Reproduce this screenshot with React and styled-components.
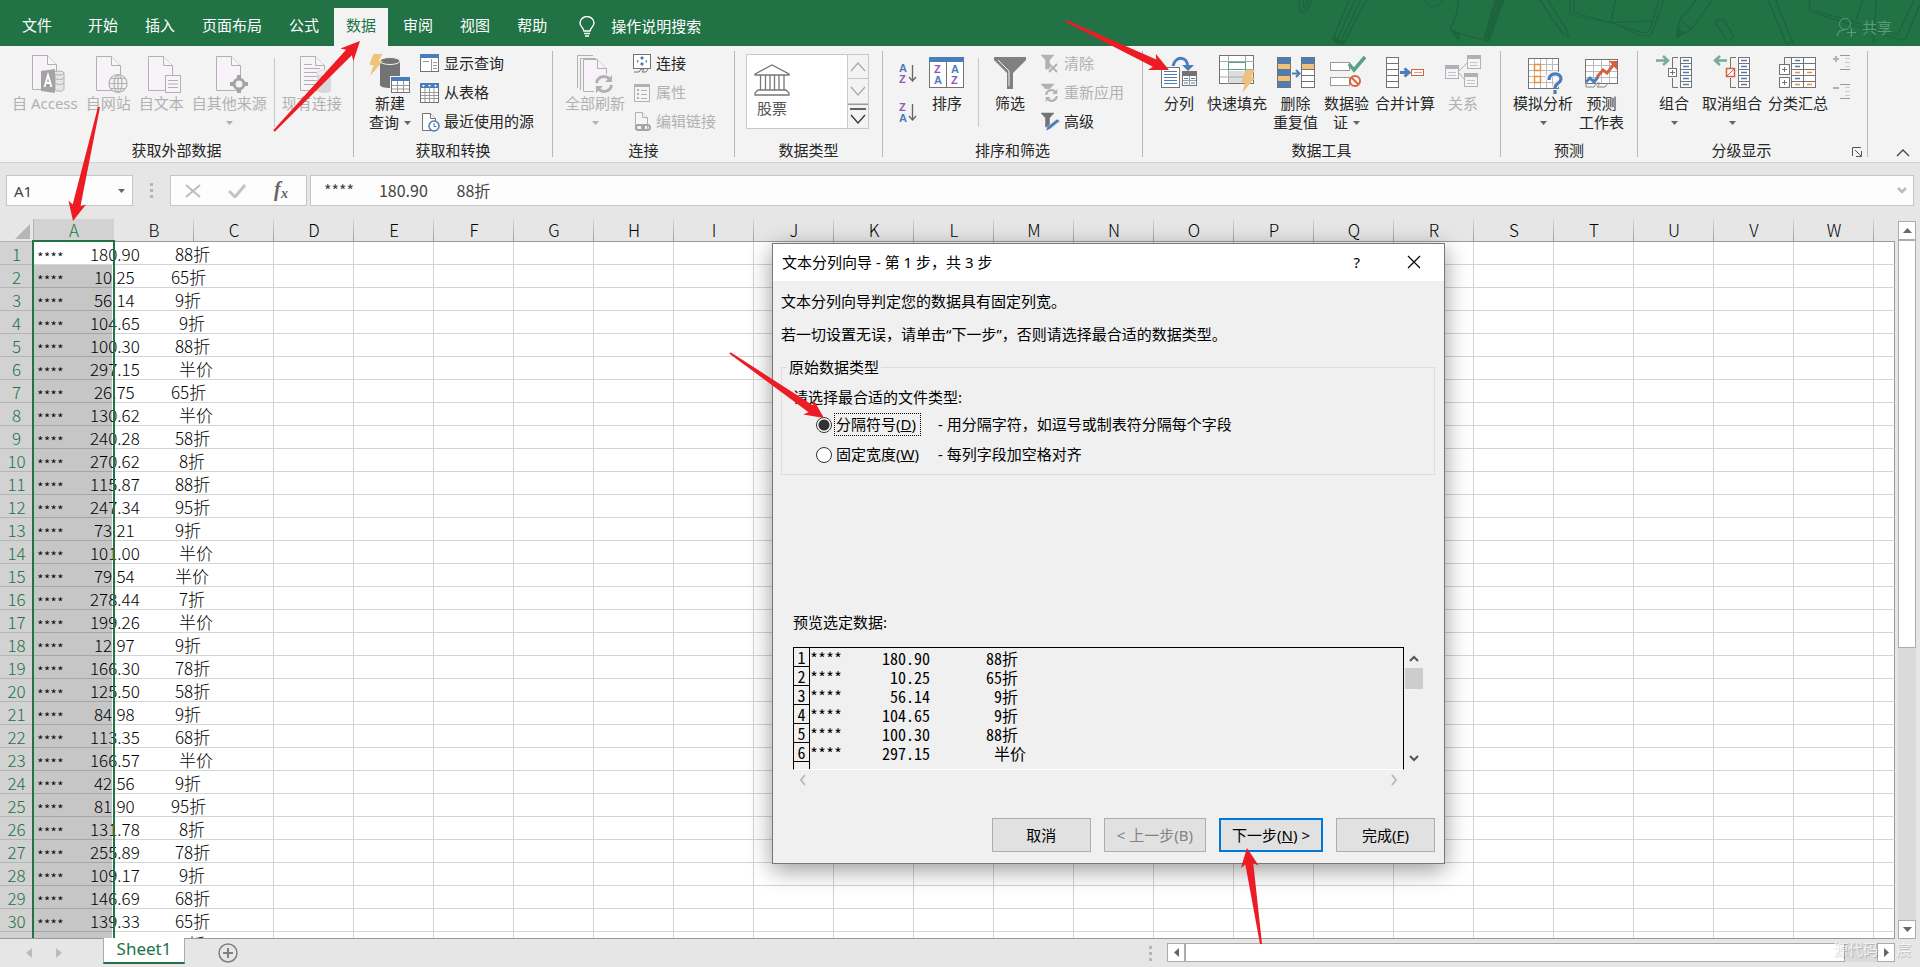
import React from "react";
import styled, { createGlobalStyle, css } from "styled-components";

const ui = `"Noto Sans", "Noto Sans CJK SC", sans-serif`;
const cell = `"Noto Sans CJK SC", "Noto Sans", sans-serif`;
const mono = `"Noto Sans Mono CJK SC", "Liberation Mono", "Noto Sans CJK SC", monospace`;
const green = "#217346";
const off = "#b1b1b1";
const dark = "#737373";
const blue = "#4a7ebb";

const Global = createGlobalStyle`
  *, *::before, *::after { box-sizing: border-box; }
  body { margin: 0; font: 15px/20px ${ui}; color: #262626; overflow: hidden; }
  button, input { font: inherit; color: inherit; margin: 0; }
  button { border: 0; padding: 0; background: none; }
  svg { display: block; flex: none; }
`;

const App_ = styled.div`
  position: relative;
  display: flex;
  flex-direction: column;
  height: 100vh;
  background: #e6e6e6;
`;

/* ---------- title tabs ---------- */
const TitleBar = styled.header`
  display: flex;
  align-items: flex-end;
  height: 46px;
  flex: none;
  background: ${green};
  color: #fff;
  position: relative;
`;
const Tabs = styled.nav`
  display: flex;
  gap: 3px;
  padding-left: 10px;
`;
const Tab = styled.button`
  height: 38px;
  padding: 0 12px 4px;
  white-space: nowrap;
  margin-right: ${(p) => (p.$file ? 9 : 0)}px;
  ${(p) => p.$on && css`background: #f3f3f3; color: ${green};`}
`;
const Tell = styled.button`
  display: flex;
  align-items: center;
  gap: 16px;
  height: 38px;
  margin-left: 20px;
  padding-bottom: 2px;
`;
const Doodle = styled.svg`
  position: absolute;
  right: 0;
  top: 0;
`;
const Share = styled.button`
  display: flex;
  align-items: center;
  gap: 6px;
  height: 38px;
  margin: 0 28px 0 auto;
  color: #5b9c79;
  position: relative;
`;

/* ---------- ribbon ---------- */
const Ribbon = styled.div`
  display: flex;
  flex: none;
  height: 117px;
  padding: 5px 0;
  background: #f3f3f3;
  border-bottom: 1px solid #d2d2d2;
`;
const Group = styled.section`
  display: flex;
  flex-direction: column;
  width: ${(p) => p.$w}px;
  flex: none;
  padding-top: 3px;
  border-right: 1px solid #b8b8b8;
  position: relative;
`;
const GroupBody = styled.div`
  display: flex;
  flex: 1;
  align-items: flex-start;
  padding-left: ${(p) => p.$pad || 10}px;
  gap: ${(p) => p.$gap || 0}px;
`;
const GroupLabel = styled.div`
  line-height: 12px;
  text-align: center;
  padding: 0 ${(p) => (p.$launch ? 22 : 0)}px 1px 0;
`;
const Launch = styled.button`
  position: absolute;
  right: 4px;
  bottom: 0;
`;
const Big = styled.button`
  display: flex;
  flex-direction: column;
  align-items: center;
  min-width: 50px;
  padding: 0 3px;
  line-height: 19px;
  white-space: nowrap;
  color: ${(p) => (p.disabled ? off : "#262626")};
`;
const Line = styled.span`
  display: flex;
  align-items: center;
  justify-content: center;
  gap: 5px;
  height: 19px;
`;
const Smalls = styled.div`
  display: flex;
  flex-direction: column;
  gap: 10px;
  margin-left: 2px;
`;
const Small = styled.button`
  display: flex;
  align-items: center;
  gap: 4px;
  height: 19px;
  white-space: nowrap;
  color: ${(p) => (p.disabled ? off : "#262626")};
  span { padding-bottom: 2px; }
`;
const Rule = styled.div`
  width: 1px;
  height: 69px;
  margin: 4px 2px 0;
  background: #c8c8c8;
`;
const Gallery = styled.div`
  display: flex;
  width: 123px;
  height: 75px;
  background: #fff;
  border: 1px solid #c8c8c8;
`;
const GalleryItem = styled.button`
  flex: 1;
  display: flex;
  flex-direction: column;
  align-items: flex-start;
  gap: 2px;
  padding: 9px 0 0 7px;
  color: #555;
  span { padding-left: 3px; }
`;
const GalleryNav = styled.div`
  display: flex;
  flex-direction: column;
  width: 21px;
  border-left: 1px solid #c8c8c8;
`;
const NavBtn = styled.button`
  flex: 1;
  display: grid;
  place-items: center;
  background: #f3f3f3;
  border-bottom: 1px solid #c8c8c8;
  &:last-child { background: #f3f3f3; border-top: 1px solid #999; border-bottom: 0; }
`;
const SortCol = styled.div`
  display: flex;
  flex-direction: column;
  gap: 18px;
  padding: 9px 0 0;
`;
const Collapse = styled.button`
  margin: auto 10px 0 auto;
`;

/* ---------- formula bar ---------- */
const FormulaBar = styled.div`
  display: flex;
  flex: none;
  height: 56px;
  padding: 12px 6px 13px;
`;
const Field = styled.div`
  display: flex;
  align-items: center;
  background: #fdfdfd;
  border: 1px solid #c6c6c6;
  color: #444;
`;
const NameBox = styled(Field)`
  width: 127px;
  padding: 0 7px;
  input { width: 100%; border: 0; background: none; outline: 0; padding: 0; }
`;
const FxBox = styled(Field)`
  width: 137px;
  justify-content: space-between;
  padding: 0 15px 0 14px;
`;
const FormulaField = styled(Field)`
  flex: 1;
  margin-left: 3px;
  padding: 0 6px 0 13px;
  input { flex: 1; height: 27px; border: 0; background: none; outline: 0; padding: 0 0 2px; font: 16px/24px ${cell}; }
`;
const Grip = styled.div`
  display: flex;
  flex-direction: column;
  justify-content: center;
  align-items: center;
  gap: 3px;
  width: ${(p) => p.$w}px;
  i { width: 3px; height: 3px; background: #b5b5b5; }
`;

/* ---------- sheet ---------- */
const Main = styled.main`
  position: relative;
  display: flex;
  flex: 1;
  min-height: 0;
`;
const Sheet = styled.div`
  position: relative;
  flex: 1;
  overflow: hidden;
  border-bottom: 1px solid #999;
`;
const Table = styled.table`
  width: 100%;
  table-layout: fixed;
  border-collapse: separate;
  border-spacing: 0;
  font: 300 17px/20px ${cell};
  background: #fff;
  color: #000;
  th, td { padding: 0; height: 23px; line-height: 22px; }
  tbody td {
    border-right: 1px solid #d4d4d4;
    border-bottom: 1px solid rgba(0, 0, 0, 0.17);
  }
  tbody td:last-child { border-right-color: #999; }
`;
const ColHead = styled.th`
  font-weight: 300;
  border-bottom: 1px solid #999;
  background: ${(p) => (p.$on ? "#d2d2d2" : "linear-gradient(#d4d4d4, #a0a0a0) right / 1px 100% no-repeat #e6e6e6")};
  color: ${(p) => (p.$on ? green : "#000")};
  ${(p) => p.$last && css`background: #e6e6e6;`}
`;
const Corner = styled.th`
  background: #e6e6e6;
  border-right: 1px solid #b5b5b5;
  border-bottom: 1px solid #b5b5b5;
  svg { margin: 2px 3px 0 auto; }
`;
const RowHead = styled.th`
  &&& { padding-top: 2px; line-height: 20px; }
  font-weight: 300;
  background: #d2d2d2;
  color: ${green};
  border-right: 1px solid ${green};
  border-bottom: 1px solid #b5b5b5;
`;
const DataCell = styled.td`
  background: ${(p) => (p.$active ? "#fff" : "linear-gradient(to right, #c6c6c6 78px, transparent 78px)")};
`;
const CellText = styled.div`
  display: flex;
  height: 22px;
  padding: 1px 0 0 3px;
  white-space: pre;
`;
const Stars = styled.span`
  width: 28px;
  padding-top: 4px;
  line-height: 22px;
  font-size: 15px;
`;
const Amount = styled.span`
  width: ${(p) => 74 - p.$short * 4}px;
  margin-left: ${(p) => 25 + p.$short * 4}px;
  flex: none;
`;
const Off = styled.span`
  margin-left: ${(p) => 11 + p.$short * 4 - p.$narrow * 4}px;
`;
const Selection = styled.div`
  position: absolute;
  left: 32px;
  top: 21px;
  bottom: -3px;
  width: 83px;
  border: 2px solid ${green};
`;
const VScroll = styled.div`
  display: flex;
  flex-direction: column;
  width: 18px;
  margin: 2px 4px 0 3px;
  background: #dadada;
`;
const ScrollBtn = styled.button`
  display: grid;
  place-items: center;
  width: 18px;
  height: 19px;
  flex: none;
  background: #fff;
  border: 1px solid #ababab;
`;
const VThumb = styled.div`
  height: 408px;
  background: #fff;
  border: 1px solid #ababab;
  margin-bottom: auto;
`;

/* ---------- bottom bar ---------- */
const Bottom = styled.footer`
  position: relative;
  display: flex;
  flex: none;
  height: 28px;
  padding-right: 25px;
`;
const SheetNav = styled.div`
  display: flex;
  align-items: center;
  justify-content: center;
  gap: 24px;
  width: 88px;
`;
const SheetTab = styled.button`
  width: 82px;
  height: 26px;
  margin: -1px 0 0 15px;
  padding-bottom: 2px;
  background: #fff;
  border: 1px solid #ababab;
  border-top: 0;
  border-bottom: 2px solid ${green};
  color: ${green};
  font-size: 17px;
`;
const AddSheet = styled.button`
  margin: 4px auto auto 33px;
`;
const HScroll = styled.div`
  display: flex;
  width: 728px;
  height: 19px;
  margin: 4px 0 0;
  background: #dadada;
`;
const HThumb = styled.div`
  width: 660px;
  margin-right: auto;
  background: #fff;
  border: 1px solid #ababab;
`;
const Watermark = styled.div`
  position: absolute;
  right: 9px;
  bottom: 8px;
  display: flex;
  gap: 18px;
  color: rgba(255, 255, 255, 0.75);
  text-shadow: 1px 1px 1px rgba(0, 0, 0, 0.2);
`;

/* ---------- dialog ---------- */
const Dialog = styled.section`
  position: absolute;
  left: 772px;
  top: 24px;
  width: 673px;
  height: 621px;
  display: flex;
  flex-direction: column;
  background: #f0f0f0;
  border: 1px solid #777;
  box-shadow: 0 6px 22px rgba(0, 0, 0, 0.4);
  color: #000;
`;
const DialogTitle = styled.header`
  display: flex;
  align-items: center;
  flex: none;
  height: 37px;
  padding: 0 23px 2px 9px;
  background: #fff;
  button:first-of-type { margin: 0 47px 0 auto; }
`;
const DialogBody = styled.form`
  display: flex;
  flex-direction: column;
  flex: 1;
  padding: 10px 9px 11px 8px;
  p { margin: 0 0 13px; }
`;
const Types = styled.fieldset`
  display: flex;
  flex-direction: column;
  margin: 0;
  padding: 10px 5px 10px;
  border: 1px solid #dcdcdc;
  legend { padding: 0 2px; }
`;
const Prompt = styled.div`
  padding: 0 0 7px 6px;
`;
const Choice = styled.div`
  display: grid;
  grid-template-columns: 16px 85px 1fr;
  column-gap: 3px;
  align-items: center;
  height: 20px;
  margin: 0 0 ${(p) => (p.$last ? 0 : 10)}px 29px;
  label {
    padding: 0 0 1px 1px;
    white-space: nowrap;
    outline: ${(p) => (p.$focus ? "1px dotted #000" : "none")};
  }
  > span { padding: 0 0 1px 15px; }
`;
const Radio = styled.input`
  appearance: none;
  width: 16px;
  height: 16px;
  border: 1px solid #333;
  border-radius: 50%;
  background: #fff;
  &:checked { background: radial-gradient(circle, #333 5px, #fff 6px); }
`;
const PreviewLabel = styled.div`
  margin: 137px 12px 15px;
`;
const PreviewArea = styled.div`
  display: grid;
  grid-template-columns: 611px 19px;
  margin: 0 12px;
`;
const Preview = styled.div`
  height: 123px;
  overflow: hidden;
  border: 1px solid #000;
  border-bottom-color: #fff;
  table { border-collapse: separate; border-spacing: 0; font: 16px/18px ${mono}; }
  th {
    width: 16px;
    height: 19px;
    padding: 0;
    font-weight: 400;
    line-height: 18px;
    border: solid #000;
    border-width: 0 1px 1px 0;
  }
  td { padding: 0; line-height: 18px; white-space: pre; }
`;
const PreviewV = styled.div`
  display: flex;
  flex-direction: column;
  align-items: center;
  padding: 8px 0;
  margin-left: 1px;
`;
const PreviewThumb = styled.div`
  width: 18px;
  height: 21px;
  margin: 6px 0 auto;
  background: #cdcdcd;
`;
const PreviewH = styled.div`
  display: flex;
  align-items: center;
  justify-content: space-between;
  height: 20px;
  padding: 0 6px;
`;
const Actions = styled.div`
  display: flex;
  justify-content: flex-end;
  gap: 13px;
  margin-top: auto;
`;
const Action = styled.button`
  min-width: 99px;
  height: 34px;
  padding: 0 12px;
  background: #e1e1e1;
  border: 1px solid #adadad;
  color: ${(p) => (p.disabled ? "#838383" : "#000")};
  ${(p) => p.$primary && css`border: 2px solid #0078d7; padding: 0 11px;`}
`;

const Overlay = styled.svg`
  position: absolute;
  left: 0;
  top: 0;
  pointer-events: none;
`;

/* ---------- icons ---------- */
const I = ({ w = 40, h = 40, children }) => (
  <svg width={w} height={h} viewBox={`0 0 ${w} ${h}`} fill="none" aria-hidden="true">{children}</svg>
);
const Doc = ({ x, y, w = 24, h = 34, f = 9, s = off, fill = "#f7f3f8" }) => (
  <g stroke={s} fill={fill}>
    <path d={`M${x} ${y}h${w - f}l${f} ${f}v${h - f}h${-w}z`} />
    <path d={`M${x + w - f} ${y}v${f}h${f}`} />
  </g>
);
const Down = ({ c = "#666" }) => <I w={7} h={4}><path d="M0 0h7L3.5 4z" fill={c} /></I>;
const Chev = ({ d, c = "#777", w = 14, h = 8, sw = 1.3 }) => <I w={w} h={h}><path d={d} stroke={c} strokeWidth={sw} /></I>;
const Bolt = ({ x, y, s = 1 }) => (
  <path transform={`translate(${x} ${y}) scale(${s})`} d="M5 0h9L9.5 8H14L1 23l3.5-11H0z" fill="#eec27a" />
);
const Refresh = ({ x, y, s = 1 }) => (
  <g transform={`translate(${x} ${y}) scale(${s})`} stroke={off} strokeWidth="3">
    <path d="M1.5 8a7.5 7.5 0 0 1 13-4M16.5 10a7.5 7.5 0 0 1-13 4" />
    <path d="M17 0v7h-7zM1 18v-7h7z" fill={off} stroke="none" />
  </g>
);
const Rows = ({ x, y, w, n, h, s = "#777", fills }) => (
  <g stroke={s}>
    {Array.from({ length: n }, (_, i) => (
      <rect key={i} x={x} y={y + i * h} width={w} height={h} fill={fills ? fills[i] : "#fff"} />
    ))}
  </g>
);

const IcAccess = () => (
  <I>
    <Doc x={7.5} y={1.5} />
    <g fill="#e8e4e8" stroke={off}><path d="M30 19v16c0 3 9 3 9 0V19" /><ellipse cx="34" cy="19" rx="5" ry="2" /><path d="M30 24c2 2 7 2 9 0M30 29c2 2 7 2 9 0" /></g>
    <path d="M16 17l14-2v24l-14-2z" fill="#a3a3a3" />
    <path d="M19.500 33l3.500-12 3.500 12M20.500 29h5" stroke="#fff" strokeWidth="1.800" />
  </I>
);
const IcWeb = () => (
  <I>
    <Doc x={8.5} y={2.5} />
    <g stroke={off} strokeWidth="1.200"><circle cx="30" cy="29.500" r="9" fill="#f3f3f3" /><ellipse cx="30" cy="29.500" rx="4" ry="9" /><path d="M21 29.500h18M30 20.500v18M23 24.500h14M23 34.500h14" /></g>
  </I>
);
const IcText = () => (
  <I>
    <Doc x={7.5} y={2.5} />
    <rect x="24.500" y="21.500" width="15" height="17" fill="#f7f3f8" stroke={off} />
    <path d="M27 26.500h10M27 30h10M27 33.500h10" stroke={off} />
  </I>
);
const IcOther = () => (
  <I>
    <Doc x={7.5} y={2.5} />
    <circle cx="30" cy="30" r="5" stroke="#a3a3a3" strokeWidth="3" fill="#f3f3f3" />
    <path d="M30 21v4M30 35v4M21 30h4M35 30h4" stroke="#a3a3a3" strokeWidth="4" />
  </I>
);
const IcConn = () => (
  <I>
    <Doc x={8.5} y={2.5} />
    <path d="M12 10.500h8M12 14.500h16M12 18.500h16M12 22.500h16M12 26.500h16M12 30.500h16" stroke={off} />
    <path d="M25 19v17c0 4 14 4 14 0V19z" fill="#dad6da" /><ellipse cx="32" cy="19" rx="7" ry="3" fill="#eee" stroke="#ddd" />
  </I>
);
const IcNewQuery = () => (
  <I>
    <path d="M10 7v24c0 4 20 4 20 0V7z" fill={dark} /><ellipse cx="20" cy="7" rx="10" ry="3.500" fill={dark} stroke="#f3f3f3" />
    <Bolt x={-1} y={-1} s={1} />
    <rect x="20" y="22" width="20" height="18" fill="#f3f3f3" />
    <rect x="21.500" y="23.500" width="18" height="15" fill="#fff" stroke={dark} />
    <path d="M21 23h19v4H21z" fill={blue} /><path d="M27.500 27v11M33.500 27v11M22 31.500h17M22 35h17" stroke="#999" />
  </I>
);
const IcShow = () => (
  <I w={20} h={19}><rect x=".5" y=".5" width="18" height="17" fill="#fff" stroke={dark} /><path d="M0 0h19v4H0z" fill={blue} /><path d="M3 7.500h6M11.500 5v12M13 8.500h4M13 11.500h4M13 14.500h4" stroke="#999" /></I>
);
const IcFromTable = () => (
  <I w={20} h={20}><rect x=".5" y=".5" width="18" height="19" fill="#fff" stroke={dark} /><path d="M0 0h19v5H0z" fill={blue} /><path d="M2 2h3L3.500 4zM8 2h3L9.500 4zM14 2h3l-1.500 2z" fill="#fff" /><path d="M5 5v14M9.500 5v14M14 5v14M1 9.500h17M1 12.500h17M1 15.500h17" stroke="#999" /></I>
);
const IcRecent = () => (
  <I w={20} h={20}><Doc x={2.5} y={1.5} w={13} h={17} f={5} s={dark} fill="#fff" /><circle cx="14" cy="14" r="5" fill="#fff" stroke={blue} strokeWidth="1.500" /><path d="M14 11v3.500h2.500" stroke={blue} /></I>
);
const IcRefreshAll = () => (
  <I><g stroke={off}><path d="M2.500 34V1.500H18M5.500 36V4.500H21" /></g><Doc x={8.5} y={5.5} w={23} h={32} f={9} /><rect x="19" y="20" width="20" height="20" fill="#f3f3f3" /><Refresh x={20} y={21} /></I>
);
const IcLink = () => (
  <I w={19} h={19}><rect x=".5" y=".5" width="17" height="14" fill="#fff" stroke={dark} /><path d="M9 2l2 2-2 2-2-2zM9 8l2 2-2 2-2-2zM4 6l2 1-2 2zM14 6l-2 1 2 2z" fill={blue} /><path d="M1 18h5l2-3h3l-2 3h4l2-3" stroke={dark} /></I>
);
const IcProps = () => (
  <I w={19} h={19}><rect x="1.500" y="1.500" width="15" height="17" fill="#f7f3f8" stroke={off} /><path d="M1 1h16v3H1z" fill={off} /><path d="M4 7h2M4 11h2M4 15h2" stroke={off} strokeWidth="2" /><path d="M8 7.500h6M8 11.500h6M8 15.500h6" stroke={off} /></I>
);
const IcEdit = () => (
  <I w={19} h={20}><Doc x={2.5} y={.5} w={12} h={17} f={5} /><g stroke="#a3a3a3" strokeWidth="2"><rect x="3" y="13" width="8" height="5" rx="2.500" fill="#f3f3f3" /><rect x="9" y="13" width="8" height="5" rx="2.500" /></g></I>
);
const IcBank = () => (
  <I w={38} h={32}><g stroke="#777" strokeWidth="1.300"><path d="M1 10L18 1l17 9v1H1zM1 31v-2l3-3h28l3 3v2zM6.500 11v15M11.500 11v15M16 11v15M20.500 11v15M25 11v15M30 11v15" /></g></I>
);
const L = ({ x, y, c, s = 11, children }) => <text x={x} y={y} fill={c} fontSize={s} fontWeight="600" fontFamily="Liberation Sans">{children}</text>;
const IcSort = ({ a, b }) => (
  <I w={19} h={21}><L x={0} y={9} c={a === "A" ? blue : "#9458b0"}>{a}</L><L x={0} y={20} c={b === "A" ? blue : "#9458b0"}>{b}</L><path d="M13.500 2v15M10 14l3.500 4 3.500-4" stroke="#666" strokeWidth="1.300" /></I>
);
const IcSortBig = () => (
  <I><rect x="2.500" y="3.500" width="34" height="30" fill="#fff" stroke={dark} /><path d="M2 3h35v5H2z" fill={blue} /><path d="M19.500 8v25" stroke={dark} /><L x={7} y={19} c="#9458b0">Z</L><L x={7} y={30} c={blue}>A</L><L x={24} y={19} c={blue}>A</L><L x={24} y={30} c="#9458b0">Z</L></I>
);
const IcFunnel = () => (
  <I><path d="M4 3h32v3L23 19v16h-6V19L4 6z" fill="#808080" /><path d="M8 6l11 11v15" stroke="#f3f3f3" strokeWidth="1" /></I>
);
const MiniFunnel = ({ c }) => <path d="M0 1h13L8.500 6v9h-4V6z" fill={c} stroke={c} strokeWidth=".5" />;
const IcClear = () => <I w={19} h={19}><MiniFunnel c={off} /><path d="M8 10l8 8M16 10l-8 8" stroke={off} strokeWidth="2" /></I>;
const IcReapply = () => <I w={19} h={19}><MiniFunnel c={off} /><rect x="4" y="6" width="14" height="13" fill="#f3f3f3" /><Refresh x={4} y={6} s={.72} /></I>;
const IcAdv = () => <I w={19} h={19}><MiniFunnel c={dark} /><path d="M16 7l3 2-10 8-4 2 1-4z" fill={blue} stroke="#f3f3f3" strokeWidth=".5" /></I>;
const IcSplit = () => (
  <I><rect x="2.500" y="13.500" width="18" height="20" fill="#fff" stroke={dark} /><path d="M5 17.500h13M5 20.500h13M5 23.500h13M5 26.500h13M5 29.500h13" stroke={blue} /><rect x="23.500" y="17.500" width="14" height="14" fill="#fff" stroke={dark} /><path d="M23 17h15v5H23z" fill={dark} /><path d="M30.500 22v10M24 26.500h13" stroke="#999" /><path d="M25 24.500h4M32 24.500h4M25 29h4M32 29h4" stroke={blue} /><path d="M14 12C16 2 28 1 29 13" stroke={blue} strokeWidth="3" /><path d="M23 11h12l-6 6z" fill={blue} /></I>
);
const IcFlash = () => (
  <I><rect x="2.500" y="1.500" width="34" height="28" fill="#fff" stroke={dark} /><path d="M11 17h17v12H11z" fill="#ddd" /><path d="M11.500 2v28M28.500 2v28M3 7.500h34M3 15.500h34M3 23h34" stroke="#aaa" /><rect x="11.500" y="8.500" width="17" height="7" fill="#fff" stroke="#5aa088" /><Bolt x={24} y={16} /></I>
);
const Y = "#eec27a";
const IcDup = () => (
  <I><Rows x={1.5} y={3.5} w={13} n={5} h={6} fills={[blue, Y, blue, Y, blue]} s={dark} /><Rows x={25.5} y={3.5} w={13} n={5} h={6} fills={[blue, Y, "#fff", "#fff", "#fff"]} s={dark} /><path d="M16 19.500h6M20 16l3.500 3.500L20 23" stroke={blue} strokeWidth="2" /></I>
);
const IcValid = () => (
  <I><rect x="3.500" y="8.500" width="19" height="8" fill="#fff" stroke="#999" /><rect x="3.500" y="23.500" width="19" height="8" fill="#fff" stroke="#999" /><path d="M22 10l5 6L38 3" stroke="#5aa088" strokeWidth="3.500" /><circle cx="28" cy="27" r="5" fill="#fff" stroke="#d9603f" strokeWidth="2" /><path d="M24.500 23.500l7 7" stroke="#d9603f" strokeWidth="2" /></I>
);
const IcMerge = () => (
  <I><Rows x={1.5} y={3.5} w={12} n={5} h={6} s={dark} /><path d="M15 18.500h7M19.500 14.500l4.500 4-4.500 4" stroke={blue} strokeWidth="3" /><rect x="26.500" y="15.500" width="12" height="6" fill="#fff" stroke="#d9603f" /><path d="M29 18.500h8" stroke="#d9a090" /></I>
);
const IcRel = () => (
  <I><path d="M15 18l9-9M15 18l7 8" stroke={off} /><g fill="#f7f3f8" stroke={off}><rect x="2.500" y="11.500" width="13" height="13" /><rect x="24.500" y="1.500" width="13" height="13" /><rect x="21.500" y="19.500" width="13" height="13" /></g><path d="M2 11h14v4H2zM24 1h14v4H24zM21 19h14v4H21z" fill={off} /><path d="M5 18.500h8M5 21.500h8M27 8.500h8M27 11.500h8M24 26.500h8M24 29.500h8" stroke="#c9c1cc" /></I>
);
const IcWhatIf = () => (
  <I><rect x="5.500" y="4.500" width="30" height="30" fill="#fff" stroke={dark} /><path d="M11.500 5v29M17.500 5v29M23.500 5v29M29.500 5v29M6 10.500h29M6 16.500h29M6 22.500h29M6 28.500h29" stroke="#bbb" /><rect x="11.500" y="10.500" width="6" height="6" fill="#fff" stroke="#e8903c" strokeWidth="1.500" /><rect x="11.500" y="22.500" width="6" height="6" fill="#fff" stroke="#e8903c" strokeWidth="1.500" /><path d="M25 26c0-9 12-8 12-1 0 4-5 4-5 9M32 36v3" stroke="#f3f3f3" strokeWidth="6" /><path d="M26 26c0-8 12-8 12-1 0 4-6 4-6 9M32 36v4" stroke={blue} strokeWidth="3.200" /></I>
);
const IcForecast = () => (
  <I><rect x="3.500" y="5.500" width="32" height="24" fill="#fff" stroke={dark} /><path d="M11.500 6v23M19.500 6v23M27.500 6v23M4 11.500h31M4 17.500h31M4 23.500h31" stroke="#bbb" /><path d="M4 29v4h8l3-4h3l-3 4h8l3-4" stroke="#888" /><path d="M4 28l4-4 4 4 4-5" stroke={blue} strokeWidth="3" /><path d="M15 23l6-7 4 3 8-10" stroke="#d9603f" strokeWidth="3" /><path d="M27 7h8v9z" fill="#d9603f" /></I>
);
const BRows = () => <><Rows x={26.5} y={3.5} w={11} n={5} h={6} s={dark} /><path d="M29 6.500h6M29 12.500h6M29 18.500h6M29 24.500h6M29 30.500h6" stroke={blue} strokeWidth="1.500" /></>;
const IcGroup = () => (
  <I><path d="M2 6.500h11M9 2l5 4.500L9 11" stroke="#79ab97" strokeWidth="2.500" /><path d="M24 3.500h-5.500V14M18.500 24v9.500H24" stroke={dark} /><rect x="14.500" y="14.500" width="8" height="8" fill="#fff" stroke={dark} /><path d="M16 18.500h5M18.500 16v5" stroke={dark} /><BRows /></I>
);
const IcUngroup = () => (
  <I><path d="M15 6.500H4M8 2L3 6.500 8 11" stroke="#79ab97" strokeWidth="2.500" /><path d="M24 3.500h-5.500V14M18.500 24v9.500H24" stroke={dark} /><rect x="14.500" y="14.500" width="8" height="8" fill="#fff" stroke="#d9603f" strokeWidth="1.500" /><path d="M15 22l7-7" stroke="#d9603f" /><BRows /></I>
);
const IcSubtotal = () => (
  <I><path d="M13 3.500H6.500V10" stroke={dark} /><rect x="1.500" y="10.500" width="10" height="10" fill="#fff" stroke={dark} /><rect x="1.500" y="23.500" width="10" height="10" fill="#fff" stroke={dark} /><path d="M4 15.500h5M6.500 13v5M4 28.500h5M6.500 26v5" stroke={dark} /><Rows x={13.5} y={3.5} w={12} n={5} h={6} s={dark} /><Rows x={25.5} y={3.5} w={12} n={5} h={6} s={dark} /><path d="M17 6.500h5M17 12.500h5M17 24.500h5" stroke={blue} strokeWidth="1.500" /><path d="M17 18.500h5M29 18.500h5M17 30.500h5M29 30.500h5" stroke="#e8903c" strokeWidth="1.500" /></I>
);
const IcDetail = ({ minus }) => (
  <I w={19} h={19}><path d={minus ? "M0 5h6" : "M0 5h6M3 2v6"} stroke={off} strokeWidth="2" /><path d="M7 1.500h10M7 15.500h10" stroke="#999" /><path d="M12 4.500h5M12 8.500h5M12 12.500h5" stroke="#ccc" /></I>
);

const BigBtn = ({ icon, lines, arrow, disabled }) => (
  <Big disabled={disabled}>
    {icon}
    {lines.map((l, i) => (
      <Line key={i}>{l}{arrow === "inline" && i === lines.length - 1 && <Down />}</Line>
    ))}
    {arrow === "below" && <Line><Down c={disabled ? off : "#666"} /></Line>}
  </Big>
);
const SmallBtn = ({ icon, children, disabled }) => <Small disabled={disabled}>{icon}{children && <span>{children}</span>}</Small>;

/* ---------- data ---------- */
const rows = [
  ["180.90", "88折"], ["10.25", "65折"], ["56.14", "9折"], ["104.65", "9折"], ["100.30", "88折"],
  ["297.15", "半价"], ["26.75", "65折"], ["130.62", "半价"], ["240.28", "58折"], ["270.62", "8折"],
  ["115.87", "88折"], ["247.34", "95折"], ["73.21", "9折"], ["101.00", "半价"], ["79.54", "半价"],
  ["278.44", "7折"], ["199.26", "半价"], ["12.97", "9折"], ["166.30", "78折"], ["125.50", "58折"],
  ["84.98", "9折"], ["113.35", "68折"], ["166.57", "半价"], ["42.56", "9折"], ["81.90", "95折"],
  ["131.78", "8折"], ["255.89", "78折"], ["109.17", "9折"], ["146.69", "68折"], ["139.33", "65折"],
  ["118.20", "8折"],
];
const cols = "ABCDEFGHIJKLMNOPQRSTUVW".split("");

const Arrow = ({ from, to, head = 19, half = 9, shaft = 4 }) => {
  const dx = to[0] - from[0], dy = to[1] - from[1], len = Math.hypot(dx, dy);
  const ux = dx / len, uy = dy / len;
  const p = (back, side) => `${to[0] - ux * back - uy * side},${to[1] - uy * back + ux * side}`;
  return <polygon fill="#ed1c24" points={[p(0, 0), p(head, half), p(head - 3, shaft), p(len, 1), p(len, -1), p(head - 3, -shaft), p(head, -half)].join(" ")} />;
};

const tabs = ["文件", "开始", "插入", "页面布局", "公式", "数据", "审阅", "视图", "帮助"];

export default function App() {
  return (
    <App_>
      <Global />
      <TitleBar>
        <Doodle width="760" height="46" viewBox="0 0 1568 138" preserveAspectRatio="none" fill="none" stroke="#1d653d" strokeWidth="3" aria-hidden="true">
          <path d="M288 0c-6 50 18 52 24 0M296 0c-2 34 8 34 8 0M390 0l-34 118 22 14L426 0M402 0l-36 118M414 0l-40 122M546 0q18 40 38 0M616 0q-2 50-18 86l8 10 70 28 34-124M784 0l46 98 14 16-8-32L800 0M846 0v42q2 8 84 24l60 40q18 6 24-4L1040 0M854 0v38l76 30 66 30q10 2 14-8L1030 0M940 0l-10 68 90-6M1106 0l-34 60-6 52 30-24L1140 0M1072 60l24 26M1146 66q2-14 18-4l18 42q0 20-14 16zM1254 0l38 130 14 0L1270 0M1340 0v34l188 86q8 2 12-10L1568 14M1346 30l176 74 34-104M1450 0l-14 60M1478 0l-6 130" />
          <path d="M360 110l22 16-8 8-16-8zM690 0l-24 120 14 4L710 0zM598 88l20 8v30zM1066 84l18 14-18 16z" fill="#1d653d" stroke="none" />
        </Doodle>
        <Tabs>
          {tabs.map((t, i) => <Tab key={t} $file={i === 0} $on={t === "数据"}>{t}</Tab>)}
        </Tabs>
        <Tell>
          <I w={16} h={21}><path d="M5 15c0-3-4-4-4-8a7 6.500 0 0 1 14 0c0 4-4 5-4 8zM5 17.500h6M6 20h4" stroke="#fff" strokeWidth="1.400" /></I>
          操作说明搜索
        </Tell>
        <Share>
          <I w={19} h={19}><circle cx="8" cy="6" r="5.500" stroke="currentColor" /><path d="M.5 18c0-4 3-6 7-6M14.500 10v9M10 14.500h9" stroke="currentColor" strokeWidth="1.200" /></I>
          共享
        </Share>
      </TitleBar>

      <Ribbon>
        <Group $w={354}>
          <GroupBody $pad={9} $gap={2}>
            <BigBtn disabled icon={<IcAccess />} lines={["自 Access"]} />
            <BigBtn disabled icon={<IcWeb />} lines={["自网站"]} />
            <BigBtn disabled icon={<IcText />} lines={["自文本"]} />
            <BigBtn disabled icon={<IcOther />} lines={["自其他来源"]} arrow="below" />
            <Rule />
            <BigBtn disabled icon={<IcConn />} lines={["现有连接"]} />
          </GroupBody>
          <GroupLabel>获取外部数据</GroupLabel>
        </Group>
        <Group $w={199}>
          <GroupBody $pad={11} $gap={3}>
            <BigBtn icon={<IcNewQuery />} lines={["新建", "查询"]} arrow="inline" />
            <Smalls>
              <SmallBtn icon={<IcShow />}>显示查询</SmallBtn>
              <SmallBtn icon={<IcFromTable />}>从表格</SmallBtn>
              <SmallBtn icon={<IcRecent />}>最近使用的源</SmallBtn>
            </Smalls>
          </GroupBody>
          <GroupLabel>获取和转换</GroupLabel>
        </Group>
        <Group $w={182}>
          <GroupBody $pad={9} $gap={3}>
            <BigBtn disabled icon={<IcRefreshAll />} lines={["全部刷新"]} arrow="below" />
            <Smalls>
              <SmallBtn icon={<IcLink />}>连接</SmallBtn>
              <SmallBtn disabled icon={<IcProps />}>属性</SmallBtn>
              <SmallBtn disabled icon={<IcEdit />}>编辑链接</SmallBtn>
            </Smalls>
          </GroupBody>
          <GroupLabel>连接</GroupLabel>
        </Group>
        <Group $w={148}>
          <GroupBody $pad={11}>
            <Gallery>
              <GalleryItem><IcBank /><span>股票</span></GalleryItem>
              <GalleryNav>
                <NavBtn aria-label="上一行"><Chev d="M1 9l7-8 7 8" c="#aaa" w={16} h={10} /></NavBtn>
                <NavBtn aria-label="下一行"><Chev d="M1 1l7 8 7-8" c="#aaa" w={16} h={10} /></NavBtn>
                <NavBtn aria-label="更多"><Chev d="M0 1h16M1 7l7 8 7-8" c="#333" w={16} h={17} /></NavBtn>
              </GalleryNav>
            </Gallery>
          </GroupBody>
          <GroupLabel>数据类型</GroupLabel>
        </Group>
        <Group $w={260}>
          <GroupBody $pad={16} $gap={4}>
            <SortCol>
              <button aria-label="升序"><IcSort a="A" b="Z" /></button>
              <button aria-label="降序"><IcSort a="Z" b="A" /></button>
            </SortCol>
            <BigBtn icon={<IcSortBig />} lines={["排序"]} />
            <Rule />
            <BigBtn icon={<IcFunnel />} lines={["筛选"]} />
            <Smalls>
              <SmallBtn disabled icon={<IcClear />}>清除</SmallBtn>
              <SmallBtn disabled icon={<IcReapply />}>重新应用</SmallBtn>
              <SmallBtn icon={<IcAdv />}>高级</SmallBtn>
            </Smalls>
          </GroupBody>
          <GroupLabel>排序和筛选</GroupLabel>
        </Group>
        <Group $w={358}>
          <GroupBody $pad={11}>
            <BigBtn icon={<IcSplit />} lines={["分列"]} />
            <BigBtn icon={<IcFlash />} lines={["快速填充"]} />
            <BigBtn icon={<IcDup />} lines={["删除", "重复值"]} />
            <BigBtn icon={<IcValid />} lines={["数据验", "证"]} arrow="inline" />
            <BigBtn icon={<IcMerge />} lines={["合并计算"]} />
            <BigBtn disabled icon={<IcRel />} lines={["关系"]} />
          </GroupBody>
          <GroupLabel>数据工具</GroupLabel>
        </Group>
        <Group $w={137}>
          <GroupBody $pad={9}>
            <BigBtn icon={<IcWhatIf />} lines={["模拟分析"]} arrow="below" />
            <BigBtn icon={<IcForecast />} lines={["预测", "工作表"]} />
          </GroupBody>
          <GroupLabel>预测</GroupLabel>
        </Group>
        <Group $w={230}>
          <GroupBody $pad={11}>
            <BigBtn icon={<IcGroup />} lines={["组合"]} arrow="below" />
            <BigBtn icon={<IcUngroup />} lines={["取消组合"]} arrow="below" />
            <BigBtn icon={<IcSubtotal />} lines={["分类汇总"]} />
            <Smalls>
              <SmallBtn disabled icon={<IcDetail />} />
              <SmallBtn disabled icon={<IcDetail minus />} />
            </Smalls>
          </GroupBody>
          <GroupLabel $launch>分级显示</GroupLabel>
          <Launch aria-label="分级显示设置"><I w={11} h={10}><path d="M.5 9V.500H9M3 3l6 6M9.500 4v5.500H4" stroke="#555" /></I></Launch>
        </Group>
        <Collapse aria-label="折叠功能区"><Chev d="M1 7l6-6 6 6" c="#444" /></Collapse>
      </Ribbon>

      <FormulaBar>
        <NameBox><input aria-label="名称框" defaultValue="A1" /><Down /></NameBox>
        <Grip $w={37}><i /><i /><i /></Grip>
        <FxBox>
          <button aria-label="取消输入"><I w={16} h={14}><path d="M1 1l14 12M15 1L1 13" stroke="#bdbdbd" strokeWidth="2" /></I></button>
          <button aria-label="输入"><I w={18} h={14}><path d="M1 7l6 6L17 1" stroke="#c4c4c4" strokeWidth="3" /></I></button>
          <button aria-label="插入函数"><I w={18} h={20}><text x="1" y="15" fontFamily="Liberation Serif" fontStyle="italic" fontWeight="700" fontSize="20" fill="#666">f</text><text x="8" y="17" fontFamily="Liberation Serif" fontStyle="italic" fontWeight="700" fontSize="14" fill="#666">x</text></I></button>
        </FxBox>
        <FormulaField>
          <input aria-label="编辑栏" defaultValue={"****       180.90        88折"} />
          <Chev d="M1 1l4 4 4-4" w={10} h={7} sw={2.5} c="#bbb" />
        </FormulaField>
      </FormulaBar>

      <Main>
        <Sheet>
          <Table>
            <colgroup>
              <col style={{ width: 34 }} />
              {cols.map((c) => <col key={c} style={{ width: 80 }} />)}
              <col />
            </colgroup>
            <thead>
              <tr>
                <Corner><I w={15} h={15}><path d="M15 0v15H0z" fill="#b5b5b5" /></I></Corner>
                {cols.map((c) => <ColHead key={c} $on={c === "A"}>{c}</ColHead>)}
                <ColHead $last />
              </tr>
            </thead>
            <tbody>
              {rows.map(([a, d], i) => (
                <tr key={i}>
                  <RowHead>{i + 1}</RowHead>
                  <DataCell colSpan={3} $active={i === 0}>
                    <CellText>
                      <Stars>****</Stars>
                      <Amount $short={6 - a.length}>{a}</Amount>
                      <Off $short={d.length === 2 ? 1 : 0} $narrow={6 - a.length}>{d}</Off>
                    </CellText>
                  </DataCell>
                  {cols.slice(3).map((c) => <td key={c} />)}
                  <td />
                </tr>
              ))}
            </tbody>
          </Table>
          <Selection />
        </Sheet>
        <VScroll>
          <ScrollBtn aria-label="向上滚动"><I w={9} h={5}><path d="M4.500 0L9 5H0z" fill="#666" /></I></ScrollBtn>
          <VThumb />
          <ScrollBtn aria-label="向下滚动"><I w={9} h={5}><path d="M4.500 5L9 0H0z" fill="#666" /></I></ScrollBtn>
        </VScroll>

        <Dialog role="dialog" aria-label="文本分列向导">
          <DialogTitle>
            文本分列向导 - 第 1 步，共 3 步
            <button aria-label="帮助">?</button>
            <button aria-label="关闭"><Chev d="M1 1l12 12M13 1L1 13" w={14} h={14} c="#000" sw={1.2} /></button>
          </DialogTitle>
          <DialogBody>
            <p>文本分列向导判定您的数据具有固定列宽。</p>
            <p>若一切设置无误，请单击“下一步”，否则请选择最合适的数据类型。</p>
            <Types>
              <legend>原始数据类型</legend>
              <Prompt>请选择最合适的文件类型:</Prompt>
              <Choice $focus>
                <Radio type="radio" name="kind" id="kind-d" defaultChecked />
                <label htmlFor="kind-d">分隔符号(<u>D</u>)</label>
                <span>- 用分隔字符，如逗号或制表符分隔每个字段</span>
              </Choice>
              <Choice $last>
                <Radio type="radio" name="kind" id="kind-w" />
                <label htmlFor="kind-w">固定宽度(<u>W</u>)</label>
                <span>- 每列字段加空格对齐</span>
              </Choice>
            </Types>
            <PreviewLabel>预览选定数据:</PreviewLabel>
            <PreviewArea>
              <Preview>
                <table>
                  <tbody>
                    {rows.slice(0, 6).map(([a, d], i) => (
                      <tr key={i}>
                        <th>{i + 1}</th>
                        <td>{"****" + a.padStart(11) + " ".repeat(d.length === 3 ? 7 : 8) + d}</td>
                      </tr>
                    ))}
                    <tr><th /><td /></tr>
                  </tbody>
                </table>
              </Preview>
              <PreviewV>
                <Chev d="M1 6l4-4 4 4" w={10} h={7} c="#555" sw={2} />
                <PreviewThumb />
                <Chev d="M1 1l4 4 4-4" w={10} h={7} c="#555" sw={2} />
              </PreviewV>
              <PreviewH>
                <Chev d="M6 1L2 6l4 5" w={8} h={12} c="#bbb" sw={2} />
                <Chev d="M2 1l4 5-4 5" w={8} h={12} c="#bbb" sw={2} />
              </PreviewH>
            </PreviewArea>
            <Actions>
              <Action type="button">取消</Action>
              <Action type="button" disabled>&lt; 上一步(B)</Action>
              <Action type="button" $primary>下一步(<u>N</u>) &gt;</Action>
              <Action type="button">完成(<u>F</u>)</Action>
            </Actions>
          </DialogBody>
        </Dialog>
      </Main>

      <Bottom>
        <SheetNav>
          <I w={6} h={10}><path d="M6 0v10L0 5z" fill="#bbb" /></I>
          <I w={6} h={10}><path d="M0 0v10l6-5z" fill="#bbb" /></I>
        </SheetNav>
        <SheetTab>Sheet1</SheetTab>
        <AddSheet aria-label="新工作表"><I w={20} h={20}><circle cx="10" cy="10" r="9" stroke="#808080" strokeWidth="1.500" /><path d="M5 10h10M10 5v10" stroke="#808080" strokeWidth="2" /></I></AddSheet>
        <Grip $w={33}><i /><i /><i /></Grip>
        <HScroll>
          <ScrollBtn aria-label="向左滚动"><I w={5} h={9}><path d="M5 0v9L0 4.500z" fill="#666" /></I></ScrollBtn>
          <HThumb />
          <ScrollBtn aria-label="向右滚动"><I w={5} h={9}><path d="M0 0v9l5-4.500z" fill="#666" /></I></ScrollBtn>
        </HScroll>
        <Watermark><span>源代码</span><span>宸</span></Watermark>
      </Bottom>

      <Overlay width="1920" height="967" viewBox="0 0 1920 967" aria-hidden="true">
        <Arrow from={[274, 131]} to={[360, 41]} />
        <Arrow from={[99, 107]} to={[73, 221]} />
        <Arrow from={[1066, 21]} to={[1169, 70]} />
        <Arrow from={[730, 353]} to={[824, 418]} />
        <Arrow from={[1261, 944]} to={[1247, 848]} />
      </Overlay>
    </App_>
  );
}
